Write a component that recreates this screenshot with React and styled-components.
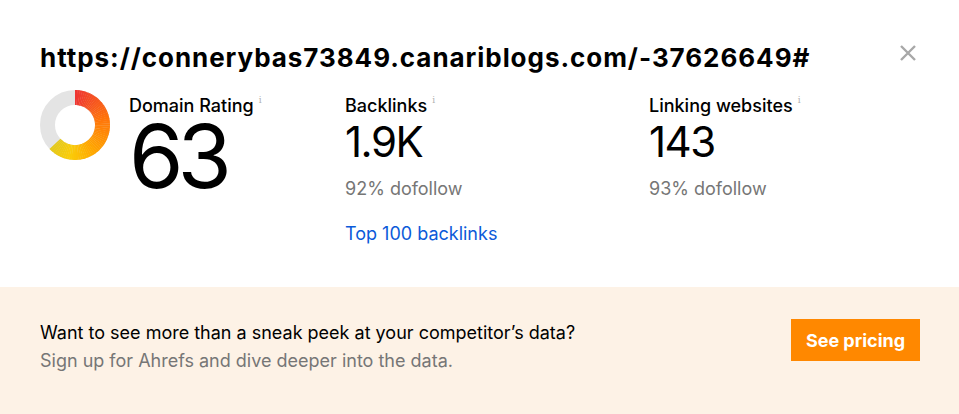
import React from 'react';
import styled, { createGlobalStyle } from 'styled-components';

const GlobalStyle = createGlobalStyle`
    body {
        margin: 0;
        background: #ffffff;
        font-family: Inter, "Noto Sans", sans-serif;
        color: #000;
    }
`;

const stats = [
    { label: 'Backlinks', value: '1.9K', sub: '92% dofollow', link: 'Top 100 backlinks' },
    { label: 'Linking websites', value: '143', sub: '93% dofollow' },
];

// colour stops along the arc, by angle in degrees from 12 o'clock
const arcStops = [
    [0, [238, 52, 52]],
    [80, [255, 118, 10]],
    [150, [255, 170, 0]],
    [190, [250, 205, 10]],
    [230, [225, 200, 30]],
];

const colorAt = (deg) => {
    for (let i = 0; i < arcStops.length - 1; i++) {
        const [a0, c0] = arcStops[i];
        const [a1, c1] = arcStops[i + 1];
        if (deg <= a1) {
            const t = (deg - a0) / (a1 - a0);
            const c = c0.map((v, k) => Math.round(v + (c1[k] - v) * t));
            return `rgb(${c.join(',')})`;
        }
    }
    const last = arcStops[arcStops.length - 1][1];
    return `rgb(${last.join(',')})`;
};

const Donut = ({ rating }) => {
    const cx = 35, cy = 35, r = 27.5;
    const end = (rating / 100) * 360;
    const steps = 60;
    const pt = (deg) => {
        const rad = (deg - 90) * Math.PI / 180;
        return [cx + r * Math.cos(rad), cy + r * Math.sin(rad)];
    };
    const segs = [];
    for (let i = 0; i < steps; i++) {
        const a0 = (end * i) / steps;
        const a1 = Math.min(end, (end * (i + 1)) / steps + 0.6);
        const [x0, y0] = pt(a0);
        const [x1, y1] = pt(a1);
        segs.push(
            <path
                key={i}
                d={`M${x0} ${y0} A${r} ${r} 0 0 1 ${x1} ${y1}`}
                stroke={colorAt((a0 + a1) / 2)}
                strokeWidth="15"
                fill="none"
            />
        );
    }
    return (
        <svg width="70" height="70" viewBox="0 0 70 70">
            <circle cx={cx} cy={cy} r={r} fill="none" stroke="#e4e4e4" strokeWidth="15" />
            {segs}
        </svg>
    );
};

const App = () => {
    return (
        <>
            <GlobalStyle />
            <Card>
                <Top>
                    <TitleRow>
                        <Title>https://connerybas73849.canariblogs.com/-37626649#</Title>
                        <Close aria-label="close">
                            <svg width="18" height="18" viewBox="0 0 18 18">
                                <path d="M2 2 L16 16 M16 2 L2 16" stroke="#a8a8a8" strokeWidth="2.4" />
                            </svg>
                        </Close>
                    </TitleRow>
                    <Stats>
                        <RatingCol>
                            <Donut rating={63} />
                            <div>
                                <Label>Domain Rating<Info>i</Info></Label>
                                <BigValue>63</BigValue>
                            </div>
                        </RatingCol>
                        {stats.map(s => (
                            <StatCol key={s.label}>
                                <Label>{s.label}<Info>i</Info></Label>
                                <Value>{s.value}</Value>
                                <Sub>{s.sub}</Sub>
                                {s.link && <StatLink href="#">{s.link}</StatLink>}
                            </StatCol>
                        ))}
                    </Stats>
                </Top>
                <Banner>
                    <div>
                        <BannerTitle>Want to see more than a sneak peek at your competitor’s data?</BannerTitle>
                        <BannerSub>Sign up for Ahrefs and dive deeper into the data.</BannerSub>
                    </div>
                    <PricingButton>See pricing</PricingButton>
                </Banner>
            </Card>
        </>
    );
}

export default App;

const Card = styled.div`
    width: 959px;
    height: 414px;
    display: flex;
    flex-direction: column;
`;

const Top = styled.div`
    box-sizing: border-box;
    height: 287px;
    padding: 40px 40px 0 40px;
`;

const TitleRow = styled.div`
    display: flex;
    justify-content: space-between;
    align-items: flex-start;
`;

const Title = styled.h1`
    margin: 0;
    font-family: Inter, sans-serif;
    font-size: 26px;
    font-weight: 700;
    line-height: 36px;
    letter-spacing: 0.95px;
`;

const Close = styled.button`
    border: 0;
    background: none;
    padding: 0;
    margin: 4px 2px 0 0;
    cursor: pointer;
`;

const Stats = styled.div`
    display: grid;
    grid-template-columns: 305px 304px 1fr;
    margin-top: 14px;
`;

const RatingCol = styled.div`
    display: flex;
    align-items: flex-start;
    gap: 19px;

    svg {
        flex-shrink: 0;
    }
`;

const StatCol = styled.div`
    display: flex;
    flex-direction: column;
`;

const Label = styled.div`
    font-size: 18px;
    font-weight: 500;
    line-height: 24px;
    margin-top: -2px;
`;

const Info = styled.sup`
    font-family: "DejaVu Serif", serif;
    font-size: 9px;
    color: #b0b0b0;
    margin-left: 5px;
    vertical-align: 9px;
`;

const BigValue = styled.div`
    font-size: 88px;
    line-height: 76px;
    letter-spacing: -6px;
`;

const Value = styled.div`
    font-size: 42px;
    line-height: 50px;
    letter-spacing: -1.5px;
    margin-top: -1px;
`;

const Sub = styled.div`
    font-size: 18px;
    line-height: 24px;
    color: #767676;
    margin-top: 10px;
`;

const StatLink = styled.a`
    font-size: 18px;
    line-height: 24px;
    color: #0b5ad9;
    text-decoration: none;
    margin-top: 21px;
`;

const Banner = styled.div`
    flex: 1;
    background: #fdf2e6;
    display: flex;
    align-items: flex-start;
    justify-content: space-between;
    padding: 32px 39px 0 40px;
`;

const BannerTitle = styled.div`
    font-size: 18px;
    line-height: 28px;
    color: #000;
`;

const BannerSub = styled.div`
    font-size: 18px;
    line-height: 28px;
    color: #767676;
`;

const PricingButton = styled.button`
    background: #ff8800;
    color: #fff;
    border: 0;
    width: 129px;
    height: 42px;
    font-family: Inter, sans-serif;
    font-size: 18px;
    font-weight: 700;
    cursor: pointer;
`;
